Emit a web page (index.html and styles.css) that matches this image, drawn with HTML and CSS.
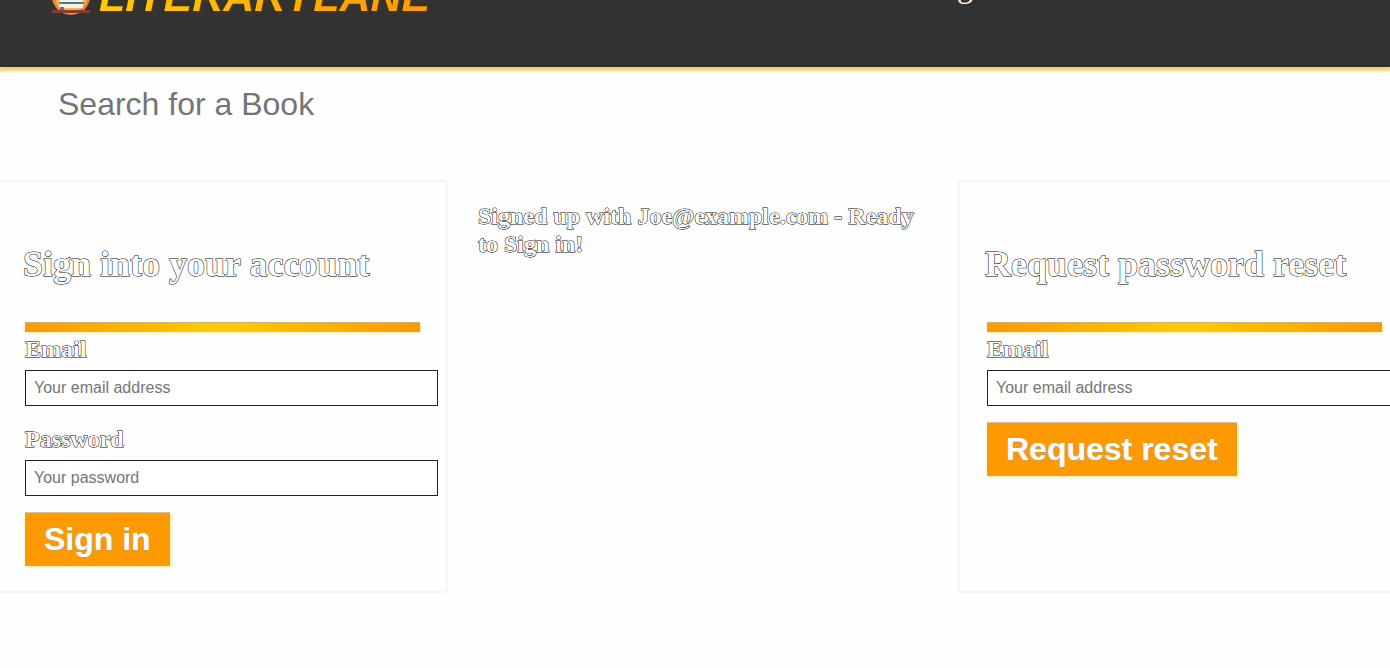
FILE: index.html
```html
<!DOCTYPE html>
<html lang="en">
<head>
<meta charset="utf-8">
<title>LiteraryLane</title>
<link rel="stylesheet" href="styles.css">
</head>
<body>
<header class="site-header">
  <a class="brand" href="#">
    <svg class="brand-icon" viewBox="0 0 40 40" aria-hidden="true">
      <circle cx="20" cy="20" r="19" fill="#ef8a32"/>
      <circle cx="20" cy="20" r="16" fill="#f7b54a"/>
      <path d="M8 12h24v20H8z" fill="#f4f1ea"/>
      <path d="M8 26h25v2H8z" fill="#4d7f7c"/>
      <path d="M9 31h4v4H9z" fill="#4779a8"/>
      <path d="M1 34h38v3H1z" fill="#8c3a31"/>
    </svg>
    <span class="brand-name">LITERARYLANE</span>
  </a>
  <nav class="site-nav"><a href="#">Login</a></nav>
</header>
<form class="search" role="search">
  <input class="search-input" type="search" placeholder="Search for a Book" aria-label="Search for a Book">
</form>
<main class="columns">
  <form class="panel">
    <h1 class="panel-title">Sign into your account</h1>
    <hr class="rule">
    <label class="label" for="email">Email</label>
    <input class="field" id="email" type="email" placeholder="Your email address">
    <label class="label" for="password">Password</label>
    <input class="field" id="password" type="password" placeholder="Your password">
    <button class="button" type="submit">Sign in</button>
  </form>
  <p class="message" role="status">Signed up with Joe@example.com - Ready to Sign in!</p>
  <form class="panel">
    <h1 class="panel-title">Request password reset</h1>
    <hr class="rule">
    <label class="label" for="reset-email">Email</label>
    <input class="field" id="reset-email" type="email" placeholder="Your email address">
    <button class="button" type="submit">Request reset</button>
  </form>
</main>
</body>
</html>
```
FILE: styles.css
```css
body {
  margin: 0;
  overflow: hidden;
  background: #fefefe;
  font-family: "Liberation Serif", "Times New Roman", serif;
}

.site-header {
  display: flex;
  align-items: flex-start;
  justify-content: space-between;
  height: 92px;
  margin-top: -25px;
  padding-left: 51px;
  background: #323232;
  box-shadow: 0 3px 3px 1px #efd070;
}

.brand {
  display: flex;
  align-items: center;
  gap: 8px;
  height: 42px;
  text-decoration: none;
}

.brand-icon {
  width: 40px;
  height: 40px;
}

.brand-name {
  font: italic bold 43px/42px "Liberation Sans", Arial, sans-serif;
  color: transparent;
  background: linear-gradient(90deg, #ffcc00, #ff9900);
  background-clip: text;
  -webkit-background-clip: text;
  filter: drop-shadow(1px 1px 1px #5a3a10);
}

.site-nav {
  width: 35%;
  line-height: 22px;
}

.site-nav a {
  color: #fff;
  font-size: 32px;
  text-decoration: none;
}

.search {
  padding: 13px 58px 0;
}

.search-input {
  width: 100%;
  height: 48px;
  padding: 0;
  border: 0;
  outline: 0;
  background: transparent;
  font: 32px "Liberation Sans", Arial, sans-serif;
  appearance: none;
}

.columns {
  display: grid;
  grid-template-columns: repeat(3, minmax(0, 1fr));
  gap: 29px;
  margin: 52px -20px 0 -4px;
}

.panel {
  padding: 61px 26px 25px 27px;
  border: 2px solid #f5f5f5;
  border-radius: 3px;
}

.panel-title,
.label,
.message {
  color: #fff;
  font-weight: bold;
  -webkit-text-stroke: 1px #000;
  paint-order: stroke fill;
}

.panel-title {
  margin: 0 0 38px -2px;
  font-size: 36px;
  line-height: 42px;
  white-space: nowrap;
}

.rule {
  height: 9px;
  margin: 0 0 3px;
  border: 0;
  background: linear-gradient(90deg, #ff9900, #ffcc00 50%, #ff9900);
  box-shadow: 1px 1px 3px #ffee80, 0 -1px 0 #b8aa90;
}

.label {
  display: block;
  height: 35px;
  font-size: 24px;
  line-height: 28px;
}

.message {
  margin: 22px 0 0;
  padding: 0 1px;
  font-size: 24px;
  line-height: 28px;
}

.field {
  display: block;
  box-sizing: content-box;
  width: 100%;
  height: 34px;
  margin: 0 0 19px;
  padding: 0 8px;
  border: 1px solid #222;
  background: #fff;
  font: 16px "Liberation Sans", Arial, sans-serif;
}

.search-input::placeholder,
.field::placeholder {
  color: #757575;
}

.button {
  display: block;
  height: 53px;
  margin-top: -2px;
  padding: 0 19px;
  border: 0;
  background: #ff9900;
  box-shadow: 1px 1px 3px #ffee80, 0 -1px 0 #bbb;
  color: #fff;
  font: bold 32px "Liberation Sans", Arial, sans-serif;
  text-shadow: 1px 1px 1px #b8a078;
}
```
